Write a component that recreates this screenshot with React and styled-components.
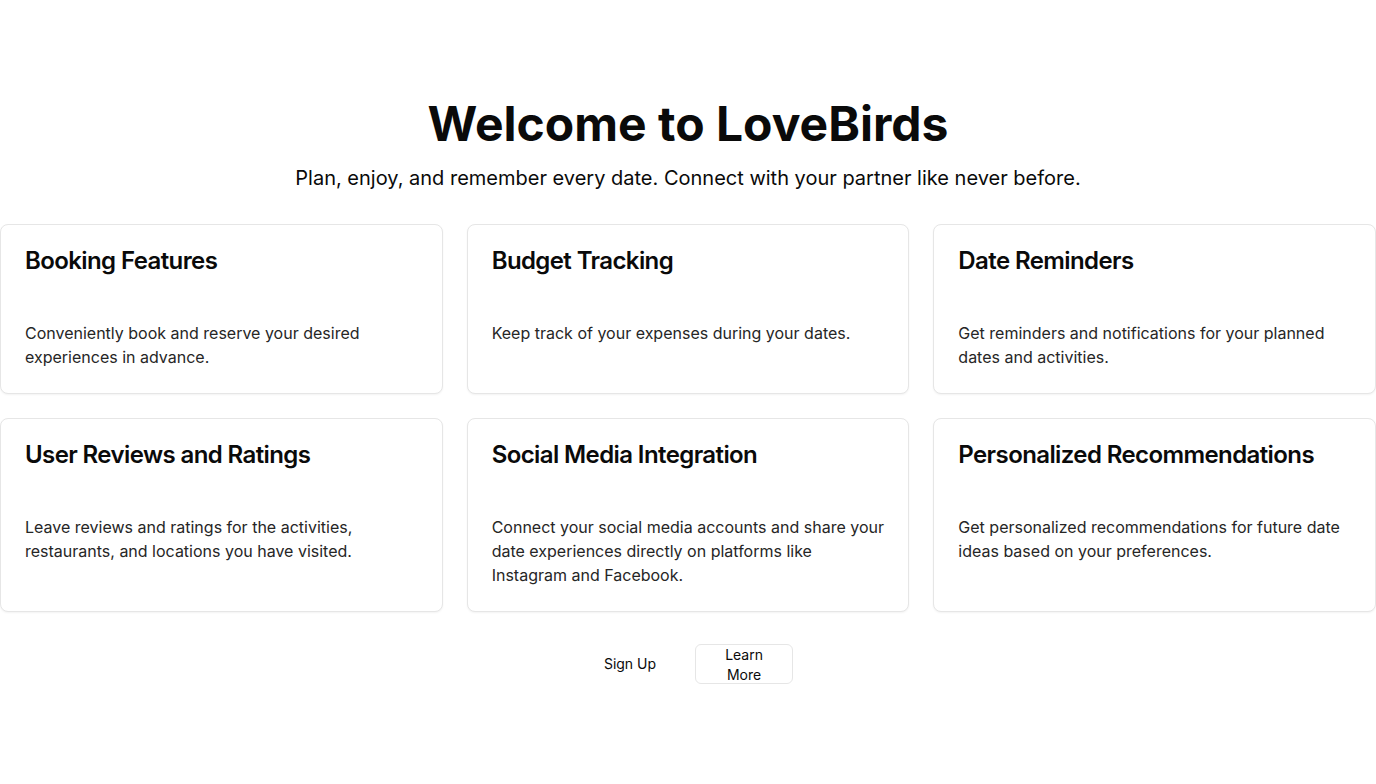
import React from "react";
import styled, { createGlobalStyle } from "styled-components";

const GlobalStyle = createGlobalStyle`
  body {
    margin: 0;
    background: #ffffff;
    font-family: Inter, "Noto Sans", sans-serif;
    color: #0a0a0a;
  }
`;

const Page = styled.main`
  display: flex;
  flex-direction: column;
  align-items: center;
  padding-top: 100px;
`;

const Title = styled.h1`
  margin: 0;
  font-size: 48px;
  line-height: 1;
  font-weight: 700;
  letter-spacing: 0;
`;

const Lead = styled.p`
  margin: 16px 0 0;
  font-size: 20px;
  line-height: 28px;
  color: #0a0a0a;
`;

const Grid = styled.section`
  width: 100%;
  margin-top: 32px;
  display: grid;
  grid-template-columns: repeat(3, 1fr);
  gap: 24px;
`;

const Card = styled.div`
  border: 1px solid #e6e6e6;
  border-radius: 8px;
  box-shadow: 0 1px 2px rgba(0, 0, 0, 0.05);
  background: #fff;
  padding: 24px;
  display: flex;
  flex-direction: column;
  gap: 48px;
`;

const CardTitle = styled.h3`
  margin: 0;
  font-size: 24px;
  line-height: 1;
  font-weight: 600;
  letter-spacing: -0.6px;
`;

const CardText = styled.p`
  margin: 0;
  font-size: 16px;
  line-height: 24px;
  color: #262626;
`;

const Actions = styled.div`
  display: flex;
  align-items: center;
  gap: 22px;
  margin-top: 32px;
  padding-left: 4px;
`;

const Button = styled.button`
  font-family: inherit;
  font-size: 14px;
  line-height: 20px;
  font-weight: 400;
  color: #0a0a0a;
  background: #fff;
  border-radius: 6px;
  cursor: pointer;
  width: ${(p) => (p.$width ? `${p.$width}px` : "auto")};
  height: 40px;
  padding: 0 16px 1px;
  white-space: ${(p) => (p.$width ? "normal" : "nowrap")};
  border: 1px solid ${(p) => (p.$outline ? "#e6e6e6" : "transparent")};
`;

const features = [
  {
    title: "Booking Features",
    text: "Conveniently book and reserve your desired experiences in advance.",
  },
  {
    title: "Budget Tracking",
    text: "Keep track of your expenses during your dates.",
  },
  {
    title: "Date Reminders",
    text: "Get reminders and notifications for your planned dates and activities.",
  },
  {
    title: "User Reviews and Ratings",
    text: "Leave reviews and ratings for the activities, restaurants, and locations you have visited.",
  },
  {
    title: "Social Media Integration",
    text: "Connect your social media accounts and share your date experiences directly on platforms like Instagram and Facebook.",
  },
  {
    title: "Personalized Recommendations",
    text: "Get personalized recommendations for future date ideas based on your preferences.",
  },
];

export default function App() {
  return (
    <>
      <GlobalStyle />
      <Page>
        <Title>Welcome to LoveBirds</Title>
        <Lead>
          Plan, enjoy, and remember every date. Connect with your partner like
          never before.
        </Lead>
        <Grid>
          {features.map((f) => (
            <Card key={f.title}>
              <CardTitle>{f.title}</CardTitle>
              <CardText>{f.text}</CardText>
            </Card>
          ))}
        </Grid>
        <Actions>
          <Button>Sign Up</Button>
          <Button $width={98} $outline>
            Learn More
          </Button>
        </Actions>
      </Page>
    </>
  );
}
